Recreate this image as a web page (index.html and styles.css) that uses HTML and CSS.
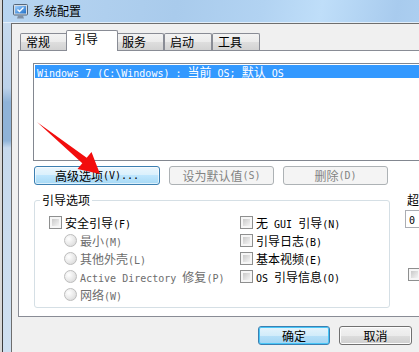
FILE: index.html
```html
<!DOCTYPE html>
<html>
<head>
<meta charset="utf-8">
<link rel="stylesheet" href="styles.css">
</head>
<body>
<div class="screen">
  <div class="behind"></div>
  <div class="frame">
    <div class="titlebar">
      <svg class="appicon" width="15" height="15" viewBox="0 0 15 15">
        <defs>
          <linearGradient id="scr" x1="0" y1="0" x2="1" y2="1">
            <stop offset="0" stop-color="#9fd0ff"/>
            <stop offset="1" stop-color="#1f6fc8"/>
          </linearGradient>
        </defs>
        <rect x="0.5" y="0.5" width="14" height="10.5" rx="1" fill="#d5dde6" stroke="#55667a"/>
        <rect x="2" y="2" width="11" height="7.5" fill="url(#scr)"/>
        <path d="M4.5 5.5l2 2 4-4" fill="none" stroke="#ffffff" stroke-width="1.4"/>
        <path d="M5 11.5h5l1 3H4z" fill="#7f90a6"/>
      </svg>
      <span class="title">系统配置</span>
    </div>
    <div class="client">
      <div class="tabs">
        <div class="tab">常规</div>
        <div class="tab sel">引导</div>
        <div class="tab">服务</div>
        <div class="tab">启动</div>
        <div class="tab">工具</div>
      </div>
      <div class="panel">
        <div class="list">
          <div class="item"><span class="a">Windows 7 (C:\Windows) : </span>当前<span class="a"> OS; </span>默认<span class="a"> OS</span></div>
        </div>
        <div class="btnrow">
          <div class="btn hot w1">高级选项<span class="a">(V)...</span></div>
          <div class="btn off w2">设为默认值<span class="a">(S)</span></div>
          <div class="btn off w2">删除<span class="a">(D)</span></div>
        </div>
        <div class="lower">
          <div class="group">
            <div class="glabel">引导选项</div>
            <div class="cols">
              <div class="col1">
                <div class="row"><span class="cb"></span><span>安全引导<span class="a">(F)</span></span></div>
                <div class="row sub dis"><span class="rb"></span><span>最小<span class="a">(M)</span></span></div>
                <div class="row sub dis"><span class="rb"></span><span>其他外壳<span class="a">(L)</span></span></div>
                <div class="row sub dis"><span class="rb"></span><span><span class="a">Active Directory </span>修复<span class="a">(P)</span></span></div>
                <div class="row sub dis"><span class="rb"></span><span>网络<span class="a">(W)</span></span></div>
              </div>
              <div class="col2">
                <div class="row"><span class="cb"></span><span>无<span class="a"> GUI </span>引导<span class="a">(N)</span></span></div>
                <div class="row"><span class="cb"></span><span>引导日志<span class="a">(B)</span></span></div>
                <div class="row"><span class="cb"></span><span>基本视频<span class="a">(E)</span></span></div>
                <div class="row"><span class="cb"></span><span><span class="a">OS </span>引导信息<span class="a">(O)</span></span></div>
              </div>
            </div>
          </div>
          <div class="side">
            <div class="lbl">超时<span class="a">(T):</span></div>
            <div class="input"><span class="a">0</span></div>
            <div class="row perm"><span class="cb"></span><span>使所有引导设置成为永久设置</span></div>
          </div>
        </div>
      </div>
      <div class="footer">
        <div class="btn def ok">确定</div>
        <div class="btn norm cancel">取消</div>
      </div>
    </div>
  </div>
  <svg class="arrow" width="419" height="352" viewBox="0 0 419 352">
    <polygon points="37,122 39,123.5 86.7,157.8 91.5,152 100,174 77.5,169 82.3,163.2" fill="#f20d0d"/>
  </svg>
</div>
</body>
</html>
```
FILE: styles.css
```css
* { box-sizing: border-box; }
html, body { margin: 0; padding: 0; }
body {
  width: 419px;
  height: 352px;
  overflow: hidden;
  background: #f0f0f0;
  font-family: "Noto Sans CJK SC", "Noto Sans", sans-serif;
  font-size: 12px;
  color: #000;
}
.a { font-family: "DejaVu Sans Mono", "Liberation Mono", monospace; font-size: 10px; }

.screen { position: relative; display: flex; width: 419px; height: 352px; overflow: hidden; }
.behind { flex: 0 0 3px; background: #d8d8d8; border-right: 1px solid #3c3c3c; }
.frame {
  flex: 0 0 470px;
  display: flex;
  flex-direction: column;
  background: linear-gradient(to bottom, #c9dcef 0%, #bcd2ea 25%, #8fb3d8 29%, #8fb3d8 40%, #c6d9ed 42%, #cfe0f1 100%);
}
.titlebar {
  height: 23px;
  display: flex;
  align-items: center;
  gap: 5px;
  padding-left: 10px;
  border-bottom: 1px solid #e2eef9;
  background: linear-gradient(100deg, #b8d5f1 0%, #a9cbec 30%, #b2d3f2 45%, #bfdef9 55%, #a8cbee 68%, #b7d8f6 85%, #c0ddf8 100%);
}
.appicon { flex: none; }
.title { line-height: 14px; color: #000; }

.client {
  flex: 1;
  margin-left: 8px;
  border-top: 1px solid #6e6e6e;
  border-left: 1px solid #6e6e6e;
  background: #f0f0f0;
}
.tabs { display: flex; align-items: flex-end; height: 20px; margin: 6px 0 0 8px; }
.tab {
  width: 48px;
  height: 17px;
  border: 1px solid #898c95;
  border-bottom: none;
  border-radius: 2px 2px 0 0;
  padding-left: 5px;
  line-height: 16px;
  background: linear-gradient(#f3f3f3, #ebebeb 50%, #dedede 50%, #d2d2d2);
}
.tab.sel {
  position: relative;
  z-index: 1;
  width: 52px;
  height: 21px;
  margin: 0 -2px -1px;
  padding-left: 7px;
  line-height: 15px;
  background: #fff;
}

.panel { margin-left: 6px; height: 267px; border: 1px solid #898c95; background: #fff; }
.list { margin: 12px 0 0 14px; width: 420px; height: 98px; border: 1px solid #828790; padding: 1px; background: #fff; }
.item { height: 13px; line-height: 13px; background: #3399ff; color: #fff; padding-left: 2px; white-space: nowrap; }

.btnrow { display: flex; gap: 9px; margin: 5px 0 0 15px; }
.btn {
  height: 19px;
  border-radius: 3px;
  display: flex;
  align-items: center;
  justify-content: center;
  white-space: nowrap;
  line-height: 14px;
}
.w1 { width: 126px; }
.w2 { width: 105px; }
.hot {
  border: 1px solid #3c7fb1;
  background: linear-gradient(#eaf6fd 0%, #d9f0fc 50%, #bee6fd 50%, #a7d9f5 100%);
  box-shadow: inset 0 0 0 1px rgba(255,255,255,0.6);
}
.off { border: 1px solid #adb2b5; background: #f4f4f4; color: #838383; }
.norm {
  border: 1px solid #707070;
  background: linear-gradient(#f2f2f2 0%, #ebebeb 50%, #dddddd 50%, #cfcfcf 100%);
  box-shadow: inset 0 0 0 1px #fcfcfc;
}
.def {
  border: 1px solid #3c7fb1;
  background: linear-gradient(#e5f4fc 0%, #d2ecfa 50%, #b6e0f8 50%, #a3d5f3 100%);
  box-shadow: inset 0 0 0 1px #48c6f7;
}

.lower { display: flex; align-items: flex-start; margin-left: 15px; }
.group { flex: none; width: 356px; height: 108px; margin-top: 15px; border: 1px solid #d5dfe5; border-radius: 3px; }
.glabel { width: fit-content; margin: -8px 0 0 5px; padding: 0 2px; background: #fff; line-height: 14px; }
.cols { display: flex; margin-top: 6px; padding-left: 14px; }
.col1 { width: 191px; }
.row { height: 18px; display: flex; align-items: center; gap: 3px; white-space: nowrap; }
.row.sub { padding-left: 15px; }
.dis { color: #6d6d6d; }
.cb {
  flex: none;
  width: 13px;
  height: 13px;
  border: 1px solid #8e8f8f;
  padding: 2px;
  background: linear-gradient(135deg, #c9c9c9, #f4f4f4) content-box, #f6f6f6;
}
.rb {
  flex: none;
  width: 13px;
  height: 13px;
  border-radius: 50%;
  border: 1px solid #bdbdbd;
  background: radial-gradient(circle at 35% 35%, #ffffff 0%, #e8e8e8 55%, #d2d2d2 100%);
}

.side { flex: none; margin-left: 15px; }
.side .lbl { margin: 8px 0 0 2px; line-height: 14px; white-space: nowrap; }
.input { margin-top: 1px; width: 60px; height: 18px; border: 1px solid #abadb3; padding-left: 3px; line-height: 16px; background: #fff; }
.perm { margin: 37px 0 0 3px; }

.footer { display: flex; gap: 9px; padding: 9px 0 0 246px; }
.ok { width: 72px; }
.cancel { width: 73px; }

.arrow { position: absolute; left: 0; top: 0; pointer-events: none; }
```
